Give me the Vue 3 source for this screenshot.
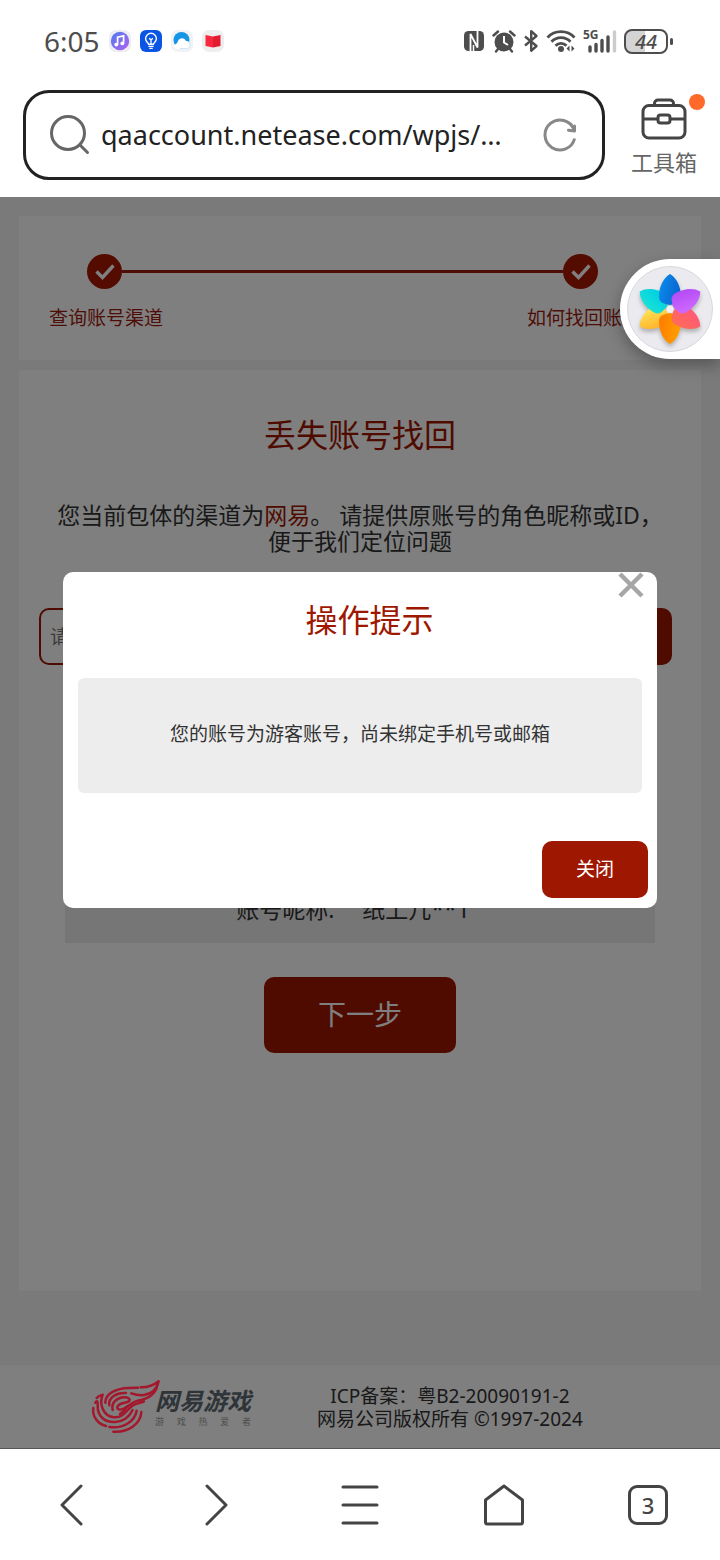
<template>
  <div class="phone">
    <!-- 状态栏 -->
    <header class="status-bar">
      <div class="status-left">
        <span class="status-time">6:05</span>
        <svg class="app-icon" viewBox="0 0 22 22">
          <defs>
            <linearGradient id="music" x1="0" y1="0" x2="1" y2="1">
              <stop offset="0" stop-color="#4d7df0"/>
              <stop offset="1" stop-color="#b060ee"/>
            </linearGradient>
          </defs>
          <rect width="22" height="22" rx="7" fill="#eeeef2"/>
          <circle cx="11" cy="11" r="9.2" fill="url(#music)"/>
          <path d="M8.6 14.5V7.2l6-1.4v7.4" fill="none" stroke="#fff" stroke-width="1.7"/>
          <circle cx="7.3" cy="14.6" r="1.9" fill="#fff"/>
          <circle cx="13.3" cy="13.4" r="1.9" fill="#fff"/>
        </svg>
        <svg class="app-icon" viewBox="0 0 22 22">
          <rect width="22" height="22" rx="6" fill="#0b55e4"/>
          <path d="M8.6 14.3c0-1.6-3-2.6-3-5.6a5.4 5.4 0 0 1 10.8 0c0 3-3 4-3 5.6z" fill="none" stroke="#fff" stroke-width="1.4"/>
          <path d="M11 14v-4M9.2 8.2L11 10l1.8-1.8M8.4 16.4h5.2M9.3 18.4h3.4" fill="none" stroke="#fff" stroke-width="1.3"/>
        </svg>
        <svg class="app-icon" viewBox="0 0 22 22">
          <rect width="22" height="22" rx="7" fill="#f0f2f5"/>
          <circle cx="10.5" cy="10" r="8" fill="#1694e6"/>
          <path d="M2 15.500c3-.6 4.300-2.300 5-4.500 1.500-3.500 6.500-3.800 8 0 5-.6 6 8 0 8H5z" fill="#fff"/>
          <path d="M9 18.500h6.500a3.500 3.500 0 0 0 .5-7" fill="none" stroke="#cfe6f8" stroke-width="1"/>
        </svg>
        <svg class="app-icon" viewBox="0 0 22 22">
          <rect width="22" height="22" rx="7" fill="#eeeeef"/>
          <path d="M3.500 5l7.500 1.500v11L3.500 16z" fill="#f8283e"/>
          <path d="M18.500 5L11 6.500v11l7.500-1.500z" fill="#e41c30"/>
        </svg>
      </div>
      <div class="status-right">
        <!-- NFC -->
        <svg width="22" height="22" viewBox="0 0 22 22">
          <rect x="1" y="1" width="20" height="20" rx="4.500" fill="#4d4d4d"/>
          <path d="M7.500 22V4L14.500 17.500V0" fill="none" stroke="#fff" stroke-width="1.800"/>
          <path d="M10.500 22V15" fill="none" stroke="#fff" stroke-width="1.500"/>
        </svg>
        <!-- 闹钟 -->
        <svg width="24" height="24" viewBox="0 0 24 24">
          <circle cx="12" cy="13" r="9.500" fill="#4d4d4d"/>
          <path d="M12 7v6.500l4 2.500" fill="none" stroke="#fff" stroke-width="2"/>
          <path d="M1.500 6.500L6 2.500M22.500 6.500L18 2.500M6 20l-2 2.500M18 20l2 2.500" fill="none" stroke="#4d4d4d" stroke-width="2.400" stroke-linecap="round"/>
        </svg>
        <!-- 蓝牙 -->
        <svg width="16" height="24" viewBox="0 0 16 24">
          <path d="M2 7.500L13.500 17 8.200 21.800V2.200L13.500 7 2 16.500" fill="none" stroke="#4d4d4d" stroke-width="2.400" stroke-linejoin="round"/>
        </svg>
        <!-- WiFi -->
        <svg width="30" height="24" viewBox="0 0 30 24">
          <path d="M1.500 8.500a18.500 18.500 0 0 1 27 0M5.500 12.800a13 13 0 0 1 19 0M9.500 16.800a7.500 7.500 0 0 1 11 0" fill="none" stroke="#4d4d4d" stroke-width="2.800"/>
          <circle cx="15" cy="20" r="3" fill="#4d4d4d"/>
          <path d="M23.500 16.500v6l-3-3zM25.500 16.500v6l3-3z" fill="#4d4d4d"/>
        </svg>
        <div class="signal">
          <span>5G</span>
          <svg width="34" height="24" viewBox="0 0 34 24">
            <path d="M7 18v4M13 15.500V22M19 11.500V22M25 8v14" stroke="#4d4d4d" stroke-width="3.400" stroke-linecap="round"/>
            <path d="M31.500 3v19" stroke="#ccc" stroke-width="3.400" stroke-linecap="round"/>
          </svg>
        </div>
        <div class="battery">
          <span class="battery-body">44</span>
          <i class="battery-tip"></i>
        </div>
      </div>
    </header>

    <!-- 地址栏 -->
    <div class="address-bar">
      <div class="address-box">
        <svg width="42" height="42" viewBox="0 0 42 42">
          <circle cx="19" cy="19" r="16.500" fill="none" stroke="#666" stroke-width="3"/>
          <path d="M31 31l7.500 7.500" stroke="#666" stroke-width="3" stroke-linecap="round"/>
        </svg>
        <input class="address-input" type="text" aria-label="网址" v-model="url">
        <button class="refresh" aria-label="刷新">
          <svg width="34" height="34" viewBox="0 0 34 34">
            <path d="M31.600 20.500A15 15 0 1 1 31 11.500" fill="none" stroke="#888" stroke-width="3"/>
            <path d="M31.500 8v5l-6-.8" fill="none" stroke="#888" stroke-width="3" stroke-linejoin="round" stroke-linecap="round"/>
          </svg>
        </button>
      </div>
      <button class="toolbox">
        <svg width="46" height="42" viewBox="0 0 46 42">
          <g fill="none" stroke="#444" stroke-width="3">
            <rect x="2" y="7.500" width="42" height="32.500" rx="6"/>
            <path d="M13.500 7V5.500a3.500 3.500 0 0 1 3.500-3.500h12a3.500 3.500 0 0 1 3.500 3.500V7"/>
            <path d="M2 21h15M29 21h15"/>
            <rect x="17" y="17" width="12" height="8" rx="2.500"/>
          </g>
        </svg>
        <span>工具箱</span>
        <i class="toolbox-dot"></i>
      </button>
    </div>

    <!-- 网页内容 -->
    <main class="web-view">
      <section class="card steps">
        <div class="steps-track">
          <span class="steps-dot">
            <svg width="22" height="20" viewBox="0 0 22 20"><path d="M2.500 9.500L8.500 15.500 19.500 3.500" fill="none" stroke="#fff" stroke-width="3.400"/></svg>
          </span>
          <i class="steps-line"></i>
          <span class="steps-dot">
            <svg width="22" height="20" viewBox="0 0 22 20"><path d="M2.500 9.500L8.500 15.500 19.500 3.500" fill="none" stroke="#fff" stroke-width="3.400"/></svg>
          </span>
        </div>
        <div class="steps-labels">
          <span v-for="(item, index) in steps" :key="index">{{ item }}</span>
        </div>
      </section>

      <section class="card find">
        <h1>丢失账号找回</h1>
        <p class="find-tip">您当前包体的渠道为<span>网易</span>。 请提供原账号的角色昵称或ID，便于我们定位问题</p>
        <div class="find-form">
          <input type="text" aria-label="角色昵称或ID" placeholder="请输入角色昵称或ID" v-model="keyword">
          <button>查询</button>
        </div>
        <dl class="find-result">
          <dt>账号昵称:</dt>
          <dd>纸上几**1</dd>
        </dl>
        <button class="find-next">下一步</button>
      </section>

      <footer class="page-footer">
        <div class="logo">
          <svg width="69" height="54" viewBox="63 82 207 162">
            <g fill="none" stroke="#a3182c" stroke-width="7.500" stroke-linecap="round" stroke-linejoin="round">
              <path d="M106 150C106 122 140 107 176 106L204 105"/>
              <path d="M212 104C236 105 252 97 266 86C260 112 246 124 222 127C206 129 196 126 184 122"/>
              <path d="M118 158C114 134 140 119 168 121"/>
              <path d="M128 172C122 148 146 131 168 134C186 138 180 148 164 150C144 153 136 166 146 170C162 176 178 152 198 146C224 140 248 134 260 106"/>
              <path d="M80 136C84 130 92 128 98 126C88 150 96 190 132 194C160 196 168 174 186 160C196 152 210 152 222 146"/>
              <path d="M76 150C82 142 84 146 83 160C82 190 104 210 136 208C162 206 178 192 188 172"/>
              <path d="M70 166C66 192 84 214 108 220"/>
              <path d="M118 223C162 228 194 206 200 174"/>
              <path d="M130 237C174 240 212 214 214 178"/>
              <path d="M150 184C160 180 164 170 172 162"/>
            </g>
          </svg>
          <div class="logo-text">
            <strong>网易游戏</strong>
            <div class="logo-slogan">
              <span v-for="(item, index) in slogan" :key="index">{{ item }}</span>
            </div>
          </div>
        </div>
        <p class="copyright">ICP备案：粤B2-20090191-2<br>网易公司版权所有 ©1997-2024</p>
      </footer>

      <!-- 弹窗 -->
      <div class="mask" v-show="dialogShow">
        <div class="dialog" role="dialog" aria-labelledby="dialog-title">
          <button class="dialog-x" aria-label="关闭" @click="closeDialog">
            <svg width="26" height="26" viewBox="0 0 26 26"><path d="M2 2l22 22M24 2L2 24" stroke="#a6a6a6" stroke-width="4.500"/></svg>
          </button>
          <h2 id="dialog-title">操作提示</h2>
          <p class="dialog-msg">您的账号为游客账号，尚未绑定手机号或邮箱</p>
          <div class="dialog-foot">
            <button @click="closeDialog">关闭</button>
          </div>
        </div>
      </div>

      <!-- 悬浮球 -->
      <button class="float-ball" aria-label="悬浮球">
        <svg width="88" height="88" viewBox="-44 -44 88 88">
          <defs>
            <linearGradient v-for="item in petals" :key="item.id" :id="item.id" x1="0" y1="0" x2="1" y2="0.300">
              <stop offset="0.200" :stop-color="item.from"/>
              <stop offset="1" :stop-color="item.to"/>
            </linearGradient>
          </defs>
          <circle r="42.500" fill="#ebebef" stroke="#d8d8dc"/>
          <g class="petals">
            <path v-for="item in petals" :key="item.id" :fill="`url(#${item.id})`" :transform="`rotate(${item.rotate})`"
                  d="M0 -35C7 -31 11 -22 11 -12C11 -6 5 -5 0 -4C-5 -5 -11 -6 -11 -12C-11 -22 -7 -31 0 -35Z"/>
          </g>
          <circle r="3.500" fill="#f3f0f3"/>
        </svg>
      </button>
    </main>

    <!-- 底部导航 -->
    <nav class="nav-bar">
      <button aria-label="后退">
        <svg width="44" height="44" viewBox="0 0 44 44"><path d="M31 3L12 22l19 19"/></svg>
      </button>
      <button aria-label="前进">
        <svg width="44" height="44" viewBox="0 0 44 44"><path d="M13 3l19 19-19 19"/></svg>
      </button>
      <button aria-label="菜单">
        <svg width="44" height="44" viewBox="0 0 44 44"><path d="M5 4h34M5 22h34M5 40h34"/></svg>
      </button>
      <button aria-label="主页">
        <svg width="44" height="44" viewBox="0 0 44 44"><path d="M22 3L40.500 17V39a2 2 0 0 1-2 2h-33a2 2 0 0 1-2-2V17z"/></svg>
      </button>
      <button aria-label="标签页">
        <span class="tab-count">3</span>
      </button>
    </nav>
  </div>
</template>

<script setup>
import {ref} from "vue";

let url = ref('qaaccount.netease.com/wpjs/…')
let keyword = ref('')
//弹窗是否显示
let dialogShow = ref(true)
//顶部步骤
let steps = ['查询账号渠道', '如何找回账号']
let slogan = ['游', '戏', '热', '爱', '者']
//悬浮球花瓣
let petals = [
  {id: 'petal-yellow', rotate: 240, from: '#ffb52e', to: '#ffe052'},
  {id: 'petal-orange', rotate: 180, from: '#ff9d00', to: '#ff8000'},
  {id: 'petal-coral', rotate: 120, from: '#ff5a78', to: '#ff6a5a'},
  {id: 'petal-cyan', rotate: 300, from: '#18e0d8', to: '#00cfe0'},
  {id: 'petal-blue', rotate: 0, from: '#0a86e8', to: '#0a66d0'},
  {id: 'petal-purple', rotate: 60, from: '#b44cf5', to: '#cc66ff'}
]

const closeDialog = () => {
  dialogShow.value = false
}
</script>

<style>
body {
  margin: 0;
  background-color: #fff;
}
</style>

<style scoped>
.phone {
  display: flex;
  flex-direction: column;
  min-height: 100vh;
  color: #333;
  font-family: "Noto Sans", "Noto Sans CJK SC", sans-serif;
}

button {
  padding: 0;
  border: 0;
  background: none;
  color: inherit;
  font-family: inherit;
  cursor: pointer;
}

input {
  box-sizing: border-box;
  min-width: 0;
  font-family: inherit;
  outline: none;
}

h1, h2, p, dl, dd {
  margin: 0;
}

svg {
  display: block;
  flex: none;
}

/*状态栏*/
.status-bar {
  display: flex;
  justify-content: space-between;
  align-items: center;
  height: 82px;
  padding: 0 47px 0 44px;
  box-sizing: border-box;
  color: #4d4d4d;
}

.status-left, .status-right {
  display: flex;
  align-items: center;
  gap: 9px;
}

.status-right {
  gap: 7px;
}

.status-time {
  font-size: 28px;
  line-height: 32px;
}

.app-icon {
  width: 22px;
  height: 22px;
}

.signal {
  position: relative;
}

.signal span {
  position: absolute;
  left: 0;
  top: 0;
  font-size: 12px;
  font-weight: 700;
  line-height: 12px;
}

.battery {
  display: flex;
  align-items: center;
  gap: 2px;
}

.battery-body {
  width: 44px;
  height: 25px;
  box-sizing: border-box;
  border: 2px solid #4d4d4d;
  border-radius: 8px;
  background: linear-gradient(90deg, #d4d4d4 48%, #fff 48%);
  font-size: 20px;
  font-weight: 500;
  font-style: italic;
  line-height: 21px;
  text-align: center;
}

.battery-tip {
  width: 3px;
  height: 7px;
  border-radius: 2px;
  background-color: #4d4d4d;
}

/*地址栏*/
.address-bar {
  display: flex;
  align-items: flex-start;
  gap: 26px;
  padding: 8px 23px 17px;
}

.address-box {
  display: flex;
  flex: 1;
  align-items: center;
  gap: 10px;
  height: 90px;
  box-sizing: border-box;
  padding: 0 25px 0 23px;
  border: 3px solid #222;
  border-radius: 26px;
}

.address-input {
  flex: 1;
  padding: 0;
  border: 0;
  background: none;
  color: #222;
  font-size: 27px;
  line-height: 40px;
}

.toolbox {
  position: relative;
  display: flex;
  flex-direction: column;
  align-items: center;
  gap: 7px;
  padding-top: 8px;
  color: #666;
  font-size: 22px;
  line-height: 30px;
}

.toolbox-dot {
  position: absolute;
  top: 4px;
  right: -8px;
  width: 16px;
  height: 16px;
  border-radius: 50%;
  background-color: #ff6a2b;
}

/*网页*/
.web-view {
  position: relative;
  display: flex;
  flex: 1;
  flex-direction: column;
  border-bottom: 1px solid #555;
  background-color: #f5f5f5;
}

.card {
  margin: 0 19px;
  background-color: #fff;
}

.steps {
  margin-top: 19px;
  padding: 38px 0 28px;
}

.steps-track {
  display: flex;
  align-items: center;
  padding: 0 103px 0 68px;
}

.steps-dot {
  display: flex;
  align-items: center;
  justify-content: center;
  width: 35px;
  height: 35px;
  border-radius: 50%;
  background-color: #a81700;
}

.steps-line {
  flex: 1;
  height: 3px;
  background-color: #9e1b10;
}

.steps-labels {
  display: flex;
  justify-content: space-between;
  margin-top: 15px;
  padding: 0 60px 0 30px;
  color: #9e1b10;
  font-size: 19px;
  line-height: 28px;
}

.find {
  display: flex;
  flex: 1;
  flex-direction: column;
  align-items: center;
  margin-top: 10px;
  margin-bottom: 74px;
}

.find h1 {
  margin-top: 41px;
  color: #9e1700;
  font-size: 32px;
  font-weight: 400;
  line-height: 48px;
}

.find-tip {
  margin-top: 43px;
  padding: 0 30px;
  font-size: 23px;
  line-height: 26px;
  text-align: center;
}

.find-tip span {
  color: #9e1700;
}

.find-form {
  display: flex;
  align-self: stretch;
  gap: 16px;
  height: 57px;
  margin: 54px 29px 0 20px;
}

.find-form input {
  flex: 1;
  padding: 0 9px;
  border: 2px solid #9e1700;
  border-radius: 10px;
  background-color: #fff;
  font-size: 19px;
}

.find-form input::placeholder {
  color: #757575;
}

.find-form button {
  width: 116px;
  border-radius: 10px;
  background-color: #9e1700;
  color: #fff;
  font-size: 19px;
}

.find-result {
  display: flex;
  align-items: flex-end;
  align-self: stretch;
  justify-content: center;
  gap: 28px;
  height: 240px;
  margin: 38px 46px 0;
  padding: 0 14px 18px 0;
  box-sizing: border-box;
  background-color: #ececec;
  font-size: 23px;
  line-height: 32px;
}

.find-next {
  width: 192px;
  height: 76px;
  margin-top: 34px;
  padding-bottom: 4px;
  border-radius: 10px;
  background-color: #9e1700;
  color: #fff;
  font-size: 28px;
}

.page-footer {
  display: flex;
  align-items: center;
  gap: 66px;
  height: 83px;
  padding-left: 91px;
  background-color: #fff;
}

/*logo不受遮罩影响*/
.logo {
  position: relative;
  z-index: 3;
  display: flex;
  align-items: center;
  color: #2e3438;
}

.logo-text {
  margin-left: -5px;
}

.logo-text strong {
  display: block;
  font-size: 24px;
  font-style: italic;
  font-weight: 700;
  line-height: 30px;
}

.logo-slogan {
  display: flex;
  justify-content: space-between;
  color: #4d4d4d;
  font-size: 9px;
  line-height: 12px;
}

.copyright {
  padding-top: 2px;
  font-size: 19px;
  line-height: 23px;
  text-align: center;
}

/*弹窗*/
.mask {
  position: absolute;
  inset: 0;
  z-index: 2;
  padding: 375px 63px 0;
  background-color: rgba(0, 0, 0, 0.5);
}

.dialog {
  position: relative;
  padding: 24px 9px 10px;
  border-radius: 10px;
  background-color: #fff;
}

.dialog-x {
  position: absolute;
  top: 0;
  right: 13px;
}

.dialog h2 {
  padding-left: 19px;
  color: #9e1700;
  font-size: 32px;
  font-weight: 400;
  line-height: 48px;
  text-align: center;
}

.dialog-msg {
  margin: 34px 6px 48px;
  padding: 42px 20px 45px;
  border-radius: 6px;
  background-color: #ededed;
  font-size: 19px;
  line-height: 28px;
  text-align: center;
}

.dialog-foot {
  display: flex;
  justify-content: flex-end;
}

.dialog-foot button {
  width: 106px;
  height: 57px;
  padding-bottom: 3px;
  border-radius: 10px;
  background-color: #9e1700;
  color: #fff;
  font-size: 19px;
}

/*悬浮球*/
.float-ball {
  position: absolute;
  top: 62px;
  right: 0;
  z-index: 4;
  display: flex;
  align-items: center;
  padding: 6px;
  border-radius: 50px 0 0 50px;
  background-color: #fff;
  box-shadow: 0 6px 16px rgba(0, 0, 0, 0.3);
}

.petals {
  filter: drop-shadow(0 3px 2px rgba(0, 0, 0, 0.25));
}

/*底部导航*/
.nav-bar {
  display: flex;
  height: 111px;
  background-color: #fff;
}

.nav-bar button {
  display: flex;
  flex: 1;
  align-items: center;
  justify-content: center;
}

.nav-bar path {
  fill: none;
  stroke: #444;
  stroke-width: 3;
  stroke-linecap: round;
  stroke-linejoin: round;
}

.tab-count {
  width: 40px;
  height: 40px;
  box-sizing: border-box;
  border: 3px solid #444;
  border-radius: 9px;
  color: #444;
  font-size: 22px;
  font-weight: 500;
  line-height: 34px;
  text-align: center;
}
</style>
